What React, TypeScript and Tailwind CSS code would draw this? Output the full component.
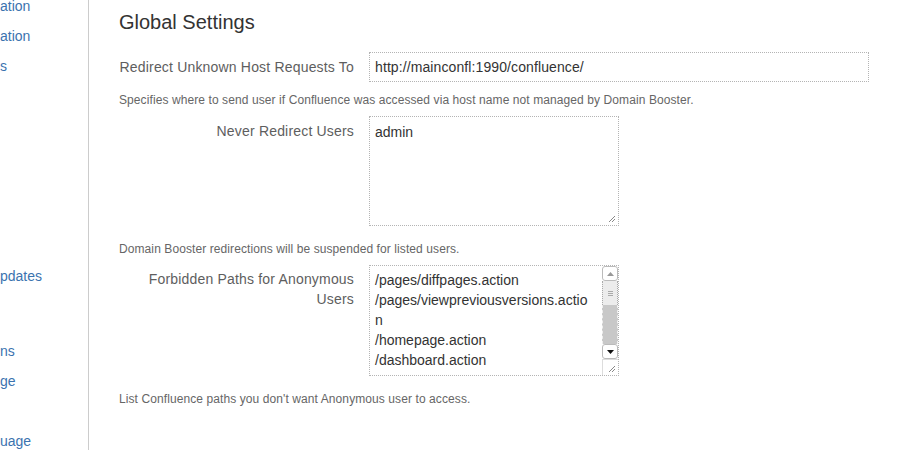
import React from 'react';

const sideItems: { text: string; gapBefore?: number }[] = [
  { text: 'ation' },
  { text: 'ation' },
  { text: 's' },
  { text: 'pdates', gapBefore: 180 },
  { text: 'ns', gapBefore: 45 },
  { text: 'ge' },
  { text: 'uage', gapBefore: 30 },
];

const Grip = () => (
  <svg width="10" height="10" viewBox="0 0 10 10" className="absolute right-[2px] bottom-[2px]">
    <path d="M9 3 L3 9 M9 6 L6 9" stroke="#888" strokeWidth="1" />
  </svg>
);

function Field({ label, children }: { label: React.ReactNode; children: React.ReactNode }) {
  return (
    <div className="flex items-start">
      <div className="w-[235px] shrink-0 text-right text-[14px] tracking-[0.18px] text-[#5e5e5e]">{label}</div>
      <div className="ml-[15px]">{children}</div>
    </div>
  );
}

export default function App() {
  return (
    <div className="flex w-[920px] h-[450px] overflow-hidden bg-white" style={{ fontFamily: '"Liberation Sans", Arial, sans-serif' }}>
      {/* sidebar, scrolled off to the left */}
      <div className="w-[89px] shrink-0 border-r border-[#cccccc] overflow-hidden">
        <div className="-mt-[9px] flex flex-col">
          {sideItems.map((it, i) => (
            <div
              key={i}
              className="h-[30px] leading-[30px] text-[14px] text-[#3b73af] whitespace-nowrap"
              style={it.gapBefore ? { marginTop: it.gapBefore } : undefined}
            >
              {it.text}
            </div>
          ))}
        </div>
      </div>

      {/* main */}
      <div className="flex-1 pl-[30px]">
        <h2 className="mt-[10px] text-[20px] leading-[24px] text-[#333]">Global Settings</h2>

        <div className="mt-[18px]">
          <Field label={<div className="leading-[30px]">Redirect Unknown Host Requests To</div>}>
            <div className="w-[500px] h-[30px] border border-dotted border-[#b4b4b4] bg-white px-[5px] leading-[28px] text-[14px] tracking-[0.1px] text-[#333]">
              http://mainconfl:1990/confluence/
            </div>
          </Field>
        </div>
        <p className="mt-[10px] text-[12px] leading-[16px] tracking-[0.09px] text-[#666]">
          Specifies where to send user if Confluence was accessed via host name not managed by Domain Booster.
        </p>

        <div className="mt-[8px]">
          <Field label={<div className="pt-[5px] leading-[20px]">Never Redirect Users</div>}>
            <div className="relative w-[250px] h-[110px] border border-dotted border-[#b4b4b4] bg-white px-[5px] pt-[5px] leading-[20px] text-[14px] text-[#333]">
              admin
              <Grip />
            </div>
          </Field>
        </div>
        <p className="mt-[15px] text-[12px] leading-[16px] tracking-[0.09px] text-[#666]">
          Domain Booster redirections will be suspended for listed users.
        </p>

        <div className="mt-[8px]">
          <Field
            label={
              <div className="pt-[4px] leading-[20px]">
                Forbidden Paths for Anonymous
                <br />
                Users
              </div>
            }
          >
            <div className="relative w-[250px] h-[111px] border border-dotted border-[#b4b4b4] bg-white pl-[5px] pt-[4px] leading-[20px] text-[14px] text-[#333] overflow-hidden">
              <div>/pages/diffpages.action</div>
              <div>/pages/viewpreviousversions.actio</div>
              <div>n</div>
              <div>/homepage.action</div>
              <div>/dashboard.action</div>

              {/* scrollbar */}
              <div className="absolute right-0 top-0 w-[16px] h-[93px] flex flex-col bg-white">
                <div className="h-[15px] border border-[#bbb] rounded-[3px] bg-white flex items-center justify-center">
                  <svg width="7" height="4" viewBox="0 0 7 4">
                    <path d="M0 4 L3.5 0 L7 4 Z" fill="#999" />
                  </svg>
                </div>
                <div className="h-[24px] border-x border-dotted border-[#aaa] bg-[#ececec] flex flex-col items-center justify-center gap-[1px]">
                  <div className="w-[5px] h-px bg-[#aaa]" />
                  <div className="w-[5px] h-px bg-[#aaa]" />
                  <div className="w-[5px] h-px bg-[#aaa]" />
                </div>
                <div className="flex-1 border-x border-dashed border-[#eee] bg-[#c8c8c8]" />
                <div className="h-[15px] border border-[#bbb] rounded-[3px] bg-white flex items-center justify-center">
                  <svg width="7" height="4" viewBox="0 0 7 4">
                    <path d="M0 0 L3.5 4 L7 0 Z" fill="#111" />
                  </svg>
                </div>
              </div>
              <div className="absolute right-0 bottom-0 w-[16px] h-[16px] border-l border-t border-[#ddd]" />
              <Grip />
            </div>
          </Field>
        </div>
        <p className="mt-[15px] text-[12px] leading-[16px] tracking-[0.09px] text-[#666]">
          List Confluence paths you don't want Anonymous user to access.
        </p>
      </div>
    </div>
  );
}
